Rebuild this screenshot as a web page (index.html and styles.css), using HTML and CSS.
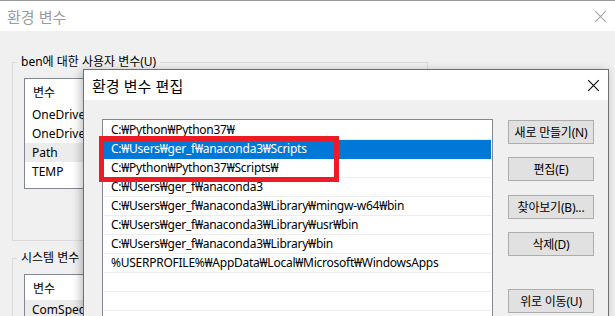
FILE: index.html
```html
<!DOCTYPE html>
<html lang="ko">
<head>
  <meta charset="UTF-8" />
  <title>환경 변수</title>
  <link rel="stylesheet" href="styles.css">
</head>
<body>
  <!-- 뒤쪽 창: 환경 변수 -->
  <div class="window">
    <div class="titlebar">
      <span class="title inactive">환경 변수</span>
      <span class="close inactive-x"></span>
    </div>

    <div class="group group-user">
      <span class="legend">ben에 대한 사용자 변수(U)</span>
      <div class="varlist">
        <div class="varhead">변수</div>
        <div class="varrow">OneDrive</div>
        <div class="varrow">OneDrive</div>
        <div class="varrow sel">Path</div>
        <div class="varrow">TEMP</div>
      </div>
    </div>

    <div class="group group-sys">
      <span class="legend">시스템 변수</span>
      <div class="varlist">
        <div class="varhead">변수</div>
        <div class="varrow sel">ComSpec</div>
      </div>
    </div>
  </div>

  <!-- 앞쪽 창: 환경 변수 편집 -->
  <div class="dialog">
    <div class="titlebar dlg-title">
      <span class="title">환경 변수 편집</span>
      <span class="close"></span>
    </div>
    <div class="dlg-body">
      <div class="pathlist">
        <div class="row">C:₩Python₩Python37₩</div>
        <div class="row selected">C:₩Users₩ger_f₩anaconda3₩Scripts</div>
        <div class="row">C:₩Python₩Python37₩Scripts₩</div>
        <div class="row">C:₩Users₩ger_f₩anaconda3</div>
        <div class="row">C:₩Users₩ger_f₩anaconda3₩Library₩mingw-w64₩bin</div>
        <div class="row">C:₩Users₩ger_f₩anaconda3₩Library₩usr₩bin</div>
        <div class="row">C:₩Users₩ger_f₩anaconda3₩Library₩bin</div>
        <div class="row">%USERPROFILE%₩AppData₩Local₩Microsoft₩WindowsApps</div>
        <div class="row"></div>
        <div class="row"></div>
      </div>
      <div class="buttons">
        <button class="btn">새로 만들기(N)</button>
        <button class="btn">편집(E)</button>
        <button class="btn">찾아보기(B)...</button>
        <button class="btn">삭제(D)</button>
        <button class="btn btn-up">위로 이동(U)</button>
      </div>
    </div>
  </div>

  <!-- 강조 표시 -->
  <div class="highlight"></div>
</body>
</html>
```

FILE: styles.css
```css
html, body {
  margin: 0;
  padding: 0;
}
body {
  font-family: "Noto Sans", "Noto Sans CJK KR", sans-serif;
  font-size: 12px;
  color: #000;
  background: #f0f0f0;
  border-top: 1px solid #9a9a9a;
  position: relative;
  height: 315px;
  overflow: hidden;
}

/* 공통 제목 표시줄 */
.titlebar {
  height: 30px;
  background: white;
  display: flex;
  align-items: center;
  justify-content: space-between;
  padding: 0 9px 0 7px;
}
.title {
  font-family: "Noto Sans CJK KR", sans-serif;
  font-size: 15px;
}
.title.inactive { color: #9b9b9b; }
.close {
  width: 11px;
  height: 11px;
  position: relative;
}
.close::before, .close::after {
  content: "";
  position: absolute;
  left: -2px;
  top: 5px;
  width: 15px;
  height: 1px;
  background: #000;
  transform: rotate(45deg);
}
.close::after { transform: rotate(-45deg); }
.inactive-x::before, .inactive-x::after { background: #a0a0a0; }

/* 뒤쪽 창 */
.window {
  height: 315px;
  overflow: hidden;
}
.group {
  position: relative;
  margin-left: 12px;
  width: 403px;
  border: 1px solid #dcdcdc;
  padding: 15px 0 0 11px;
}
.group-user {
  margin-top: 31px;
  height: 162px;
}
.group-sys {
  margin-top: 17px;
  height: 60px;
}
.legend {
  position: absolute;
  top: -10px;
  left: 4px;
  padding: 0 4px;
  background: #f0f0f0;
  line-height: 18px;
}
.varlist {
  background: white;
  border: 1px solid #828790;
  width: 390px;
  height: 106px;
  padding-top: 3px;
}
.varhead {
  height: 21px;
  line-height: 21px;
  padding-left: 8px;
  margin-bottom: 2px;
}
.group-sys .varhead { margin-bottom: 1px; }
.varrow {
  height: 19px;
  line-height: 19px;
  padding-left: 7px;
}
.varrow.sel { background: #ececec; }

/* 앞쪽 창 */
.dialog {
  position: absolute;
  left: 83px;
  top: 68px;
  width: 524px;
  height: 246px;
  border: 1px solid #6f6f6f;
  border-bottom: none;
  background: #f0f0f0;
  box-shadow: -2px 2px 9px rgba(0, 0, 0, 0.28);
  overflow: hidden;
}
.dlg-title {
  padding: 0 9px 0 8px;
}
.dlg-body {
  display: flex;
  align-items: flex-start;
  padding: 19px 0 0 18px;
}
.pathlist {
  width: 389px;
  height: 200px;
  background: white;
  border: 1px solid #828790;
  padding-top: 1px;
}
.row {
  height: 18px;
  line-height: 18px;
  border-bottom: 1px solid #ececec;
  padding-left: 7px;
  margin: 0 1px;
  white-space: nowrap;
  letter-spacing: -0.25px;
}
.row.selected {
  background: #0078d7;
  color: white;
  border-bottom-color: #0078d7;
}
.buttons {
  display: flex;
  flex-direction: column;
  margin-left: 15px;
  padding-top: 1px;
}
.btn {
  width: 86px;
  height: 24px;
  margin-bottom: 13px;
  padding: 0;
  background: #e1e1e1;
  border: 1px solid #adadad;
  font-family: "Noto Sans", "Noto Sans CJK KR", sans-serif;
  font-size: 12px;
  letter-spacing: -0.2px;
  color: #000;
}
.btn:nth-child(2) { margin-bottom: 14px; }
.btn-up { margin-top: 20px; }

/* 빨간 강조 상자 */
.highlight {
  position: absolute;
  left: 99px;
  top: 135px;
  width: 230px;
  height: 36px;
  border: 5px solid #ed1c24;
}
```
